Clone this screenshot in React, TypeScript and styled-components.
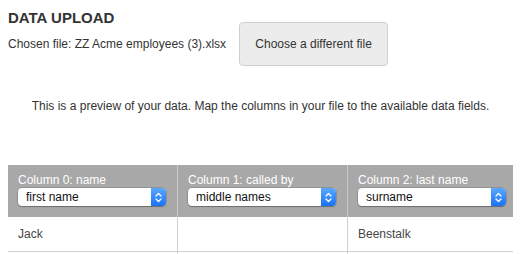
import React from "react"
import styled, { createGlobalStyle } from "styled-components"

const GlobalStyle = createGlobalStyle`
  html, body {
    overflow: hidden;
  }
  body {
    margin: 8px;
    font-family: "Liberation Sans", Arial, sans-serif;
    color: #333;
    background: #fff;
  }
`

type Column = {
  label: string
  field: string
  value: string
}

const columns: Column[] = [
  { label: "Column 0: name", field: "first name", value: "Jack" },
  { label: "Column 1: called by", field: "middle names", value: "" },
  { label: "Column 2: last name", field: "surname", value: "Beenstalk" },
]

const StepperIcon = () => (
  <svg width="7" height="11" viewBox="0 0 7 11" fill="none">
    <path d="M1 4 L3.5 1.5 L6 4" stroke="#fff" strokeWidth="1.3" strokeLinecap="round" strokeLinejoin="round" />
    <path d="M1 7 L3.5 9.5 L6 7" stroke="#fff" strokeWidth="1.3" strokeLinecap="round" strokeLinejoin="round" />
  </svg>
)

const FieldSelect: React.FC<{ value: string }> = ({ value }) => (
  <SelectBox>
    <SelectText>{value}</SelectText>
    <Stepper>
      <StepperIcon />
    </Stepper>
  </SelectBox>
)

const App = () => {
  return (
    <>
      <GlobalStyle />
      <Title>DATA UPLOAD</Title>
      <FileRow>
        <ChosenFile>Chosen file: ZZ Acme employees (3).xlsx</ChosenFile>
        <ChooseButton>Choose a different file</ChooseButton>
      </FileRow>
      <Intro>
        This is a preview of your data. Map the columns in your file to the available data fields.
      </Intro>
      <TableScroll>
        <Preview>
          <thead>
            <tr>
              {columns.map((c) => (
                <HeadCell key={c.label}>
                  <HeadLabel>{c.label}</HeadLabel>
                  <FieldSelect value={c.field} />
                </HeadCell>
              ))}
              {/* next column runs off the edge of the window */}
              <HeadCell />
            </tr>
          </thead>
          <tbody>
            <tr>
              {columns.map((c) => (
                <BodyCell key={c.label}>{c.value}</BodyCell>
              ))}
              <BodyCell />
            </tr>
            <tr>
              {columns.map((c) => (
                <BodyCell key={c.label} />
              ))}
              <BodyCell />
            </tr>
          </tbody>
        </Preview>
      </TableScroll>
    </>
  )
}

export default App

const Title = styled.h1`
  margin: 3px 0 -3px;
  font-size: 15px;
  line-height: 14px;
  font-weight: 700;
  color: #333;
`

const FileRow = styled.div`
  display: flex;
  align-items: center;
  gap: 13px;
  height: 44px;
`

const ChosenFile = styled.span`
  font-size: 12px;
  color: #333;
`

const ChooseButton = styled.button`
  height: 44px;
  width: 149px;
  padding: 0;
  font-family: "Liberation Sans", Arial, sans-serif;
  font-size: 12px;
  color: #333;
  background: #ececec;
  border: 1px solid #cfcfcf;
  border-radius: 4px;
`

const Intro = styled.p`
  margin: 32px 0 0;
  font-size: 12px;
  line-height: 16px;
  text-align: center;
  color: #333;
`

const TableScroll = styled.div`
  width: max-content;
  margin: 51px 0 0 -1px;
`

const Preview = styled.table`
  border-collapse: collapse;
  table-layout: fixed;
  width: 681px;
  min-width: 681px;
  border-left: 1px solid #d0d0d8;
`

const HeadCell = styled.th`
  width: 149px;
  min-width: 149px;
  height: 35px;
  padding: 8px 10px 9px 10px;
  background: #a8a8a8;
  border-right: 1px solid #c9c9d0;
  text-align: left;
  vertical-align: top;
`

const HeadLabel = styled.div`
  font-size: 12px;
  line-height: 15px;
  font-weight: 400;
  color: #fff;
`

const SelectBox = styled.div`
  position: relative;
  display: flex;
  align-items: center;
  height: 18px;
  width: 148px;
  background: #fff;
  border-radius: 4px;
  box-shadow: 0 0 0 0.5px rgba(0, 0, 0, 0.25), 0 1px 1px rgba(0, 0, 0, 0.25);
`

const SelectText = styled.span`
  flex: 1;
  padding-left: 8px;
  font-size: 12px;
  font-weight: 400;
  color: #111;
  white-space: nowrap;
  overflow: hidden;
`

const Stepper = styled.span`
  display: flex;
  align-items: center;
  justify-content: center;
  width: 15px;
  height: 18px;
  border-radius: 0 4px 4px 0;
  background: linear-gradient(#5aa8fc, #1a72f5);
`

const BodyCell = styled.td`
  height: 14px;
  padding: 10px;
  font-size: 12px;
  line-height: 14px;
  color: #444;
  border-right: 1px solid #d0d0d8;
  border-bottom: 1px solid #d0d0d8;
`
